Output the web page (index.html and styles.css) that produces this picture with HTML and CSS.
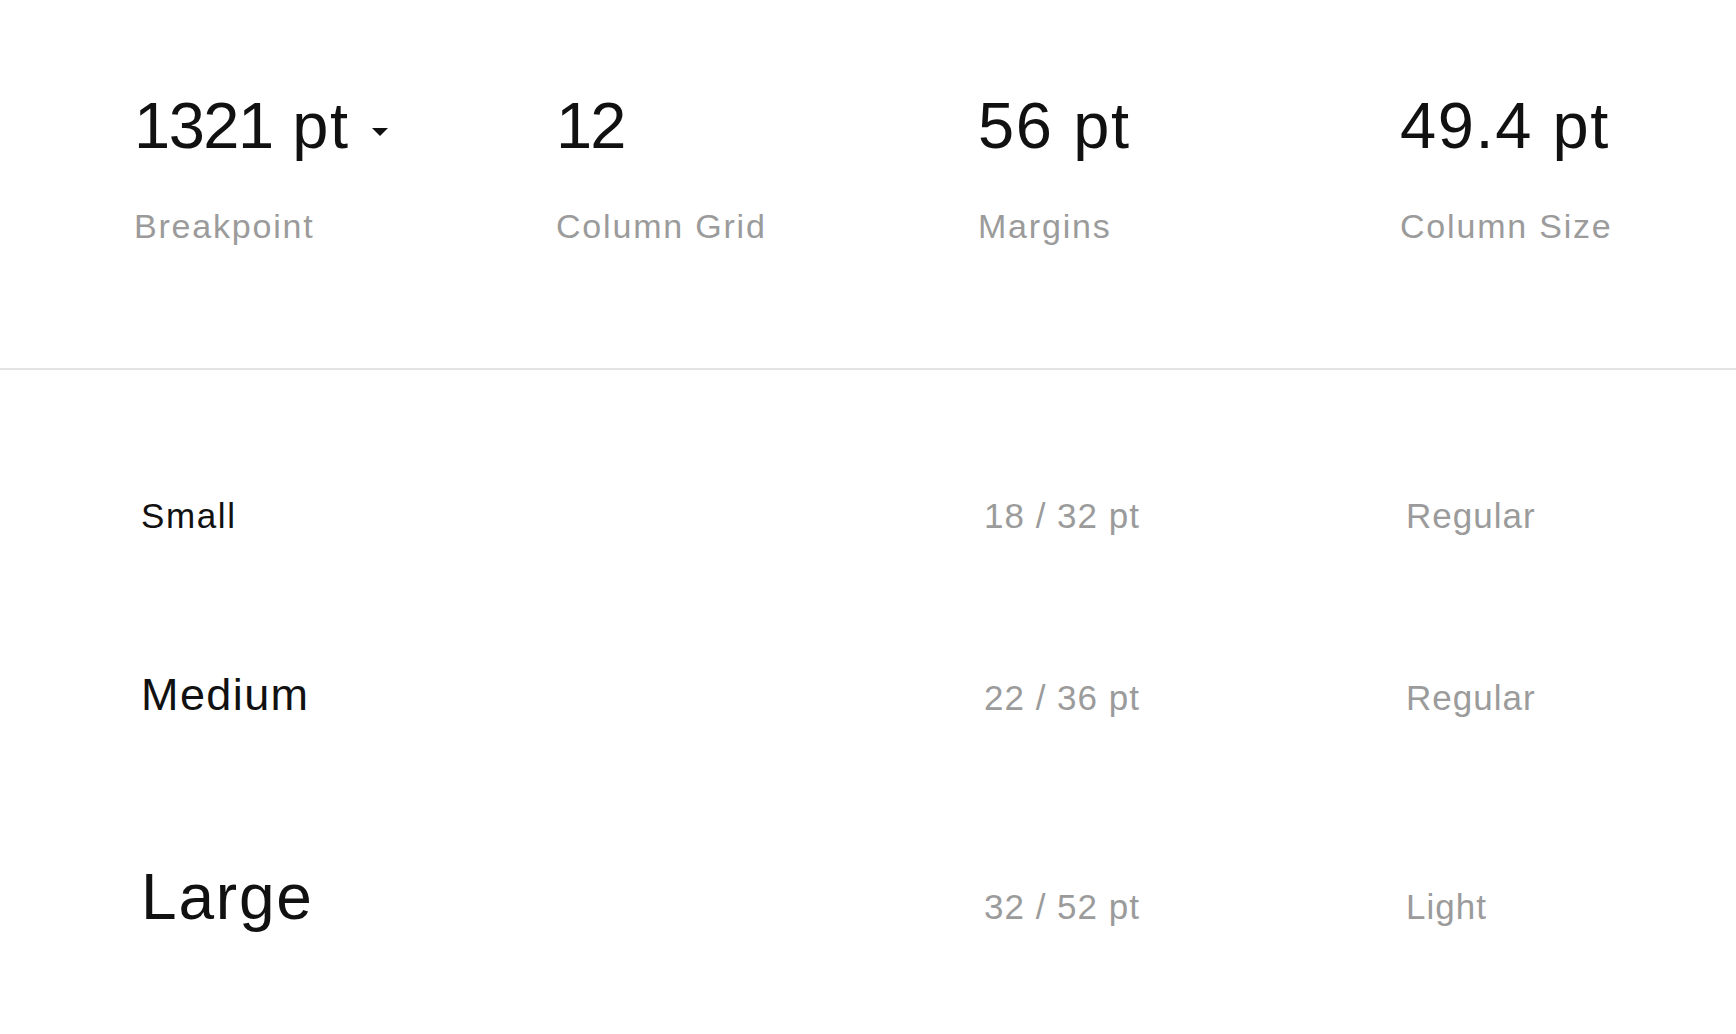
FILE: index.html
```html
<!DOCTYPE html>
<html lang="en">
<head>
<meta charset="utf-8">
<title>Breakpoint spec</title>
<link rel="stylesheet" href="styles.css">
</head>
<body>
<section class="summary">
  <div class="stat">
    <div class="stat-value">
      <span class="stat-num"><span class="digits-narrow">1321</span> pt</span>
      <svg class="caret" width="16" height="8" viewBox="0 0 16 8" aria-hidden="true"><path d="M0 0H16L8 8Z" fill="#111"/></svg>
    </div>
    <div class="stat-label">Breakpoint</div>
  </div>
  <div class="stat">
    <div class="stat-value"><span class="stat-num stat-num--narrow">12</span></div>
    <div class="stat-label">Column Grid</div>
  </div>
  <div class="stat">
    <div class="stat-value"><span class="stat-num">56 pt</span></div>
    <div class="stat-label">Margins</div>
  </div>
  <div class="stat">
    <div class="stat-value"><span class="stat-num">49.4 pt</span></div>
    <div class="stat-label">Column Size</div>
  </div>
</section>
<section class="scale">
  <div class="scale-row">
    <div class="scale-name scale-name--sm">Small</div>
    <div class="scale-meta">18 / 32 pt</div>
    <div class="scale-meta">Regular</div>
  </div>
  <div class="scale-row scale-row--md">
    <div class="scale-name scale-name--md">Medium</div>
    <div class="scale-meta">22 / 36 pt</div>
    <div class="scale-meta">Regular</div>
  </div>
  <div class="scale-row scale-row--lg">
    <div class="scale-name scale-name--lg">Large</div>
    <div class="scale-meta">32 / 52 pt</div>
    <div class="scale-meta">Light</div>
  </div>
</section>
</body>
</html>
```

FILE: styles.css
```css
* { box-sizing: border-box; }
html, body {
  margin: 0;
  padding: 0;
  background: #ffffff;
}
body {
  font-family: "Liberation Sans", Arial, sans-serif;
  color: #111111;
}
.summary {
  display: grid;
  grid-template-columns: 422px 422px 422px 1fr;
  padding: 93px 0 125px 134px;
  border-bottom: 2px solid #e4e4e4;
}
.stat {
  display: flex;
  flex-direction: column;
  min-width: 0;
}
.stat-value {
  display: flex;
  align-items: flex-start;
  height: 65px;
}
.stat-num {
  font-size: 65px;
  line-height: 65px;
  letter-spacing: 1.6px;
  white-space: nowrap;
}
.digits-narrow {
  letter-spacing: -1.5px;
}
.stat-num--narrow {
  letter-spacing: -2px;
}
.caret {
  flex: none;
  margin-left: 22px;
  margin-top: 35px;
}
.stat-label {
  margin-top: 51px;
  font-size: 34px;
  line-height: 34px;
  letter-spacing: 1.8px;
  color: #9b9b9b;
  white-space: nowrap;
}
.scale {
  display: flex;
  flex-direction: column;
  padding: 125px 0 0 141px;
}
.scale-row {
  display: grid;
  grid-template-columns: 843px 422px 1fr;
  align-items: baseline;
}
.scale-row--md { margin-top: 131px; }
.scale-row--lg { margin-top: 137px; }
.scale-name {
  line-height: 1.2;
  white-space: nowrap;
}
.scale-name--sm { font-size: 35px; letter-spacing: 1.6px; }
.scale-name--md { font-size: 45px; letter-spacing: 1.4px; }
.scale-name--lg { font-size: 64px; letter-spacing: 1.8px; }
.scale-meta {
  font-size: 35px;
  line-height: 35px;
  letter-spacing: 1px;
  color: #9b9b9b;
  white-space: nowrap;
}
```
